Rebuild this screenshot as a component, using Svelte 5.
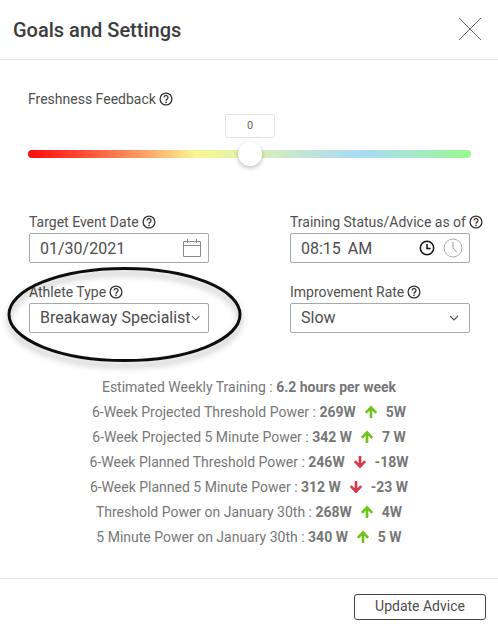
<script>
  const stats = [
    { label: 'Estimated Weekly Training', value: '6.2 hours per week' },
    { label: '6-Week Projected Threshold Power', value: '269W', dir: 'up', delta: '5W' },
    { label: '6-Week Projected 5 Minute Power', value: '342 W', dir: 'up', delta: '7 W' },
    { label: '6-Week Planned Threshold Power', value: '246W', dir: 'down', delta: '-18W' },
    { label: '6-Week Planned 5 Minute Power', value: '312 W', dir: 'down', delta: '-23 W' },
    { label: 'Threshold Power on January 30th', value: '268W', dir: 'up', delta: '4W' },
    { label: '5 Minute Power on January 30th', value: '340 W', dir: 'up', delta: '5 W' }
  ];
</script>

{#snippet help()}
  <svg class="help" viewBox="0 0 14 14" width="14" height="14" aria-hidden="true">
    <circle cx="7" cy="7" r="5.9" fill="none" stroke="#333" stroke-width="1.3" />
    <path d="M5.1 5.5a1.95 1.95 0 1 1 3 1.6c-.7.45-1.1.8-1.1 1.6" fill="none" stroke="#333" stroke-width="1.3" />
    <circle cx="7" cy="10.3" r=".85" fill="#333" />
  </svg>
{/snippet}

{#snippet chevron()}
  <svg class="chev" viewBox="0 0 10 6" width="10" height="6" aria-hidden="true">
    <path d="M1 1l4 4 4-4" fill="none" stroke="#555" stroke-width="1.1" />
  </svg>
{/snippet}

<div class="modal">
  <header>
    <h1>Goals and Settings</h1>
    <svg class="close" viewBox="0 0 24 24" width="24" height="24" aria-label="Close">
      <path d="M1 1l22 22M23 1L1 23" stroke="#666" stroke-width="1" fill="none" />
    </svg>
  </header>

  <section class="fresh">
    <div class="label">Freshness Feedback {@render help()}</div>
    <div class="valuebox">0</div>
    <div class="track"><span class="thumb"></span></div>
  </section>

  <section class="form">
    <div class="field">
      <div class="label">Target Event Date {@render help()}</div>
      <div class="input date">
        <span>01/30/2021</span>
        <svg viewBox="0 0 20 20" width="20" height="20" class="cal" aria-hidden="true">
          <path d="M1.500 3.500h17v15h-17zM1.500 7.500h17M5.500 1v4M14.500 1v4" fill="none" stroke="#8a8a8a" stroke-width="1" />
        </svg>
      </div>
    </div>
    <div class="field">
      <div class="label">Training Status/Advice as of {@render help()}</div>
      <div class="input time">
        <span class="timeval">08:15 AM</span>
        <svg viewBox="0 0 16 16" width="16" height="16" aria-hidden="true">
          <circle cx="8" cy="8" r="6.7" fill="none" stroke="#111" stroke-width="1.5" />
          <path d="M8 4v4.400h3.600" fill="none" stroke="#111" stroke-width="1.5" />
        </svg>
        <svg viewBox="0 0 20 20" width="20" height="20" aria-hidden="true">
          <circle cx="10" cy="10" r="9" fill="none" stroke="#aaa" stroke-width="1" />
          <path d="M10 4v6l3.500 4" fill="none" stroke="#999" stroke-width="1" />
        </svg>
      </div>
    </div>
    <div class="field">
      <div class="label">Athlete Type {@render help()}</div>
      <div class="input select tight"><span>Breakaway Specialist</span>{@render chevron()}</div>
    </div>
    <div class="field">
      <div class="label">Improvement Rate {@render help()}</div>
      <div class="input select"><span>Slow</span>{@render chevron()}</div>
    </div>
  </section>

  <section class="stats">
    {#each stats as s}
      <p>
        {s.label} : <b>{s.value}</b>
        {#if s.dir}
          <svg class="arrow" class:down={s.dir === 'down'} viewBox="0 0 14 14" width="14" height="14" aria-hidden="true">
            <path d="M7 13V3M1.800 7.800L7 2.400l5.200 5.400" fill="none" stroke="currentColor" stroke-width="2.600" />
          </svg>
          <b>{s.delta}</b>
        {/if}
      </p>
    {/each}
  </section>

  <footer>
    <button type="button">Update Advice</button>
  </footer>

  <svg class="ring" viewBox="0 0 250 120" width="250" height="120" aria-hidden="true">
    <defs>
      <filter id="sh" x="-10%" y="-20%" width="120%" height="150%">
        <feDropShadow dx="0" dy="5" stdDeviation="3" flood-color="#000" flood-opacity=".3" />
      </filter>
    </defs>
    <ellipse cx="124.500" cy="54.500" rx="115.500" ry="46" fill="none" stroke="#111" stroke-width="3" filter="url(#sh)" />
  </svg>
</div>

<style>
  :global(body) {
    margin: 0;
    background: #fff;
  }
  .modal {
    position: relative;
    width: 498px;
    height: 632px;
    overflow: hidden;
    display: flex;
    flex-direction: column;
    font-family: Roboto, "Liberation Sans", sans-serif;
    color: #444;
    background: #fff;
  }
  header {
    box-sizing: border-box;
    border-bottom: 1px solid #e6e6e6;
    padding: 0 16px 0 13px;
    display: flex;
    align-items: center;
    justify-content: space-between;
    flex: none;
    height: 60px;
  }
  h1 {
    margin: 0;
    font-size: 20px;
    font-weight: 500;
    color: #3c3c3c;
  }
  .close {
    display: block;
    margin-bottom: 2px;
  }
  .label {
    font-size: 14px;
    line-height: 16px;
    height: 16px;
    color: #505050;
    display: flex;
    align-items: center;
    gap: 3px;
    white-space: nowrap;
  }
  .help {
    flex: none;
  }
  .fresh {
    padding: 31px 27px 0 28px;
    flex: none;
  }
  .valuebox {
    box-sizing: border-box;
    width: 50px;
    height: 24px;
    margin: 7px 0 0 197px;
    border: 1px solid #e2e2e2;
    border-radius: 2px;
    font-size: 11px;
    line-height: 22px;
    text-align: center;
    color: #666;
  }
  .track {
    position: relative;
    height: 8px;
    margin-top: 12px;
    border-radius: 4px;
    background: linear-gradient(90deg, #ff0a0a 0%, #ff4a35 12%, #ffa66a 27%, #f7f78f 38%, #dff2b0 50%, #c6e8d0 60%, #a9daf7 75%, #a6e6d0 85%, #98fb90 100%);
  }
  .thumb {
    position: absolute;
    left: 210px;
    top: -8px;
    width: 24px;
    height: 24px;
    border-radius: 50%;
    background: #fff;
    box-shadow: 0 2px 5px rgba(0, 0, 0, 0.25);
  }
  .form {
    display: grid;
    grid-template-columns: 180px 180px;
    column-gap: 81px;
    row-gap: 21px;
    padding: 56px 0 0 29px;
    flex: none;
  }
  .field {
    display: flex;
    flex-direction: column;
    gap: 3px;
    min-width: 0;
  }
  .input {
    box-sizing: border-box;
    height: 30px;
    border: 1px solid #a8a8a8;
    border-radius: 2px;
    padding: 0 10px;
    font-size: 16px;
    color: #4d4d4d;
    display: flex;
    align-items: center;
    justify-content: space-between;
    white-space: nowrap;
  }
  .date {
    padding-right: 6px;
  }
  .time {
    justify-content: flex-start;
    padding-right: 6px;
  }
  .timeval {
    flex: 1;
    word-spacing: 3px;
  }
  .time svg:last-child {
    margin-left: 8px;
  }
  .select {
    padding-right: 10px;
    padding-bottom: 2px;
  }
  .select :global(.chev) {
    margin-top: 2px;
  }
  .tight {
    padding-right: 8px;
  }
  .stats {
    margin-top: 42px;
    text-align: center;
    font-size: 14px;
    color: #777;
    flex: none;
  }
  .stats p {
    margin: 0;
    height: 25px;
    line-height: 25px;
    white-space: nowrap;
  }
  .stats b {
    font-weight: 700;
  }
  .arrow {
    color: #6fc31b;
    margin: 0 4.500px;
    vertical-align: -2px;
  }
  .arrow.down {
    color: #dc3545;
    transform: rotate(180deg);
  }
  footer {
    margin-top: auto;
    height: 54px;
    box-sizing: border-box;
    border-top: 1px solid #e6e6e6;
    padding: 15px 12px 0 0;
    display: flex;
    justify-content: flex-end;
    align-items: flex-start;
  }
  button {
    width: 132px;
    height: 26px;
    background: #fff;
    border: 1px solid #444;
    border-radius: 3px;
    font: 14px Roboto, "Liberation Sans", sans-serif;
    color: #4d4d4d;
    padding: 0 0 2px;
  }
  .ring {
    position: absolute;
    left: 0;
    top: 260px;
    pointer-events: none;
  }
</style>
